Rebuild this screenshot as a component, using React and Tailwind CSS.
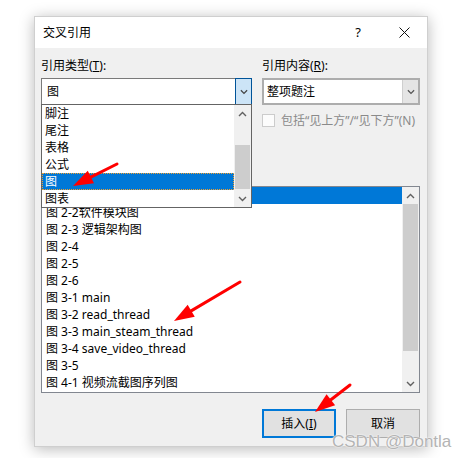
import React from 'react';

const dropItems = ['脚注', '尾注', '表格', '公式', '图', '图表'];

// first row sits under the open dropdown, only its blue highlight shows
const captions = [
  '',
  '图 2-2软件模块图',
  '图 2-3 逻辑架构图',
  '图 2-4',
  '图 2-5',
  '图 2-6',
  '图 3-1 main',
  '图 3-2 read_thread',
  '图 3-3 main_steam_thread',
  '图 3-4 save_video_thread',
  '图 3-5',
  '图 4-1 视频流截图序列图',
];

const arrows = [
  { x1: 117, y1: 164, x2: 73, y2: 186 },
  { x1: 240, y1: 282, x2: 174, y2: 321 },
  { x1: 350, y1: 385, x2: 315, y2: 412 },
];

const Chevron = ({ up, color = '#606060', w = 9 }) => (
  <svg width={w} height="6" viewBox="0 0 9 6" fill="none">
    <path
      d={up ? 'M1 5 L4.5 1.5 L8 5' : 'M1 1 L4.5 4.5 L8 1'}
      stroke={color}
      strokeWidth="1.4"
    />
  </svg>
);

const ScrollBar = ({ thumbTop, thumbHeight }) => (
  <div className="relative w-[17px] h-full bg-[#f0f0f0] shrink-0">
    <div className="absolute top-0 left-0 w-[17px] h-[17px] flex items-center justify-center">
      <Chevron up />
    </div>
    <div
      className="absolute left-[1px] w-[15px] bg-[#cdcdcd]"
      style={{ top: thumbTop, height: thumbHeight }}
    />
    <div className="absolute bottom-0 left-0 w-[17px] h-[17px] flex items-center justify-center">
      <Chevron />
    </div>
  </div>
);

const Arrow = ({ x1, y1, x2, y2 }) => {
  const dx = x2 - x1;
  const dy = y2 - y1;
  const len = Math.sqrt(dx * dx + dy * dy);
  const ux = dx / len;
  const uy = dy / len;
  const bx = x2 - ux * 20;
  const by = y2 - uy * 20;
  const px = -uy * 7;
  const py = ux * 7;
  return (
    <g>
      <line x1={x1} y1={y1} x2={bx + ux * 4} y2={by + uy * 4} stroke="#ff0000" strokeWidth="3" strokeLinecap="round" />
      <polygon
        points={`${x2},${y2} ${bx + px},${by + py} ${bx - px},${by - py}`}
        fill="#ff0000"
      />
    </g>
  );
};

export default function App() {
  return (
    <div className="relative w-[462px] h-[458px] bg-white overflow-hidden text-[12px] text-black font-['Noto_Sans','Noto_Sans_CJK_SC',sans-serif]">
      <div className="pt-[16px] pl-[34px]">
        {/* Dialog */}
        <div className="relative w-[394px] h-[431px] bg-[#f0f0f0] border border-[#cfcfcf] shadow-[0_2px_14px_rgba(0,0,0,0.28)]">
          {/* Title bar */}
          <div className="h-[31px] bg-white flex items-center pl-[8px]">
            <span className="text-[12px]">交叉引用</span>
            <div className="ml-auto flex">
              <div className="w-[46px] h-[31px] flex items-center justify-center text-[13px]">?</div>
              <div className="w-[46px] h-[31px] flex items-center justify-center">
                <svg width="11" height="11" viewBox="0 0 11 11">
                  <path d="M0.5 0.5 L10.5 10.5 M10.5 0.5 L0.5 10.5" stroke="#111" strokeWidth="1" />
                </svg>
              </div>
            </div>
          </div>

          {/* Body */}
          <div className="pl-[6px] pr-[7px]">
            <div className="grid grid-cols-[211px_158px] gap-x-[10px] mt-[9px]">
              <div>
                <div className="h-[17px] leading-[17px]">
                  引用类型(<span className="underline">T</span>):
                </div>
                <div className="mt-[4px] h-[27px] flex bg-white border border-[#7a7a7a]">
                  <div className="flex-1 flex items-center pl-[5px]">图</div>
                  <div className="w-[17px] -my-[1px] -mr-[1px] bg-[#cce4f7] border border-[#005499] flex items-center justify-center">
                    <Chevron color="#444" w={8} />
                  </div>
                </div>
              </div>
              <div>
                <div className="h-[17px] leading-[17px]">
                  引用内容(<span className="underline">R</span>):
                </div>
                <div className="mt-[4px] h-[27px] flex bg-white border-2 border-[#adadad]">
                  <div className="flex-1 flex items-center pl-[3px]">整项题注</div>
                  <div className="w-[16px] bg-[#e5e5e5] border-l border-[#cfcfcf] flex items-center justify-center">
                    <Chevron color="#555" w={8} />
                  </div>
                </div>
                <div className="mt-[9px] h-[13px] flex items-center gap-[6px] text-[#8a8a8a]">
                  <div className="w-[13px] h-[13px] shrink-0 border border-[#cccccc] bg-[#fcfcfc]" />
                  <span className="leading-[13px] whitespace-nowrap">包括“见上方”/“见下方”(N)</span>
                </div>
              </div>
            </div>

            {/* Caption list */}
            <div className="mt-[59px] h-[207px] flex bg-white border border-[#828790]">
              <div className="flex-1">
                {captions.map((c, i) => (
                  <div
                    key={i}
                    className={`h-[17px] leading-[17px] pl-[4px] whitespace-nowrap ${
                      i === 0 ? 'bg-[#0078d7] text-white' : ''
                    }`}
                  >
                    {c}
                  </div>
                ))}
              </div>
              <ScrollBar thumbTop={17} thumbHeight={147} />
            </div>

            {/* Buttons */}
            <div className="mt-[16px] flex justify-end gap-[10px]">
              <button className="w-[74px] h-[29px] bg-[#e1e1e1] border-2 border-[#0078d7] flex items-center justify-center">
                插入(<span className="underline">I</span>)
              </button>
              <button className="w-[74px] h-[29px] bg-[#e1e1e1] border border-[#adadad] flex items-center justify-center">
                取消
              </button>
            </div>
          </div>

          {/* Open dropdown of 引用类型 */}
          <div className="absolute left-[6px] top-[87px] w-[211px] h-[104px] flex bg-white border border-[#646464]">
            <div className="flex-1">
              {dropItems.map((d) => (
                <div
                  key={d}
                  className={`h-[17px] leading-[15px] pl-[2px] border border-transparent ${
                    d === '图' ? 'bg-[#0078d7] text-white border-dotted !border-[#f0a030]' : ''
                  }`}
                >
                  {d}
                </div>
              ))}
            </div>
            <ScrollBar thumbTop={40} thumbHeight={44} />
          </div>
        </div>
      </div>

      {/* Annotation arrows */}
      <svg className="absolute inset-0 pointer-events-none" width="462" height="458">
        {arrows.map((a, i) => (
          <Arrow key={i} {...a} />
        ))}
      </svg>

      {/* Watermark */}
      <div className="absolute left-[332px] top-[432px] text-[17px] leading-[20px] text-[#b4b4b4] font-['Liberation_Sans',sans-serif] [text-shadow:0_0_2px_#fff,0_0_1px_#fff]">
        CSDN @Dontla
      </div>
    </div>
  );
}
